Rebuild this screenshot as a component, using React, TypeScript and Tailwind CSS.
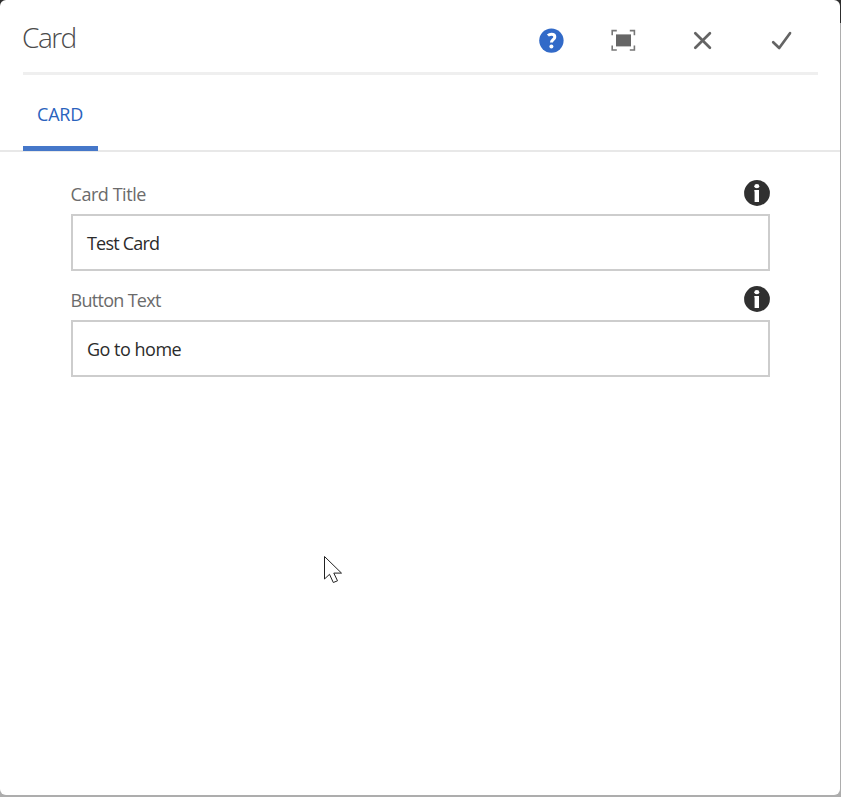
import React from "react";

function HelpIcon() {
  return (
    <svg width="26" height="26" viewBox="0 0 26 26">
      <circle cx="13.4" cy="12.6" r="12.2" fill="#326ac8" />
      <path d="M9.9 7.5C10.9 6.6 12.1 6.2 13.5 6.2c2 0 3.3 1.1 3.3 2.7 0 2.7-3.4 2.9-3.4 5.7" fill="none" stroke="#fff" strokeWidth="3" />
      <circle cx="13.4" cy="18.4" r="2" fill="#fff" />
    </svg>
  );
}

function FullscreenIcon() {
  return (
    <svg width="26" height="24" viewBox="0 0 26 24" fill="none" stroke="#777" strokeWidth="1.6">
      <path d="M2.2 6.2V1.6h4.6M19.8 1.6h4.6v4.6M24.4 16.4V21h-4.6M6.8 21H2.2v-4.6" />
      <rect x="6" y="5.4" width="15" height="12" fill="#666" stroke="none" />
    </svg>
  );
}

function CloseIcon() {
  return (
    <svg width="20" height="20" viewBox="0 0 20 20" stroke="#646464" strokeWidth="2.7" strokeLinecap="round">
      <path d="M2.3 2.2l14.6 14.6M16.9 2.2L2.3 16.8" />
    </svg>
  );
}

function CheckIcon() {
  return (
    <svg width="22" height="20" viewBox="0 0 22 20" fill="none" stroke="#646464" strokeWidth="2.7" strokeLinecap="round" strokeLinejoin="round">
      <path d="M2.2 11.2l6 5.8L19 2.2" />
    </svg>
  );
}

function InfoIcon() {
  return (
    <svg width="26" height="26" viewBox="0 0 26 26">
      <circle cx="13" cy="13" r="12.9" fill="#303030" />
      <ellipse cx="12.8" cy="6.2" rx="2.5" ry="2.1" fill="#fff" />
      <path d="M10.3 10H15v12h-4.4V11.4h-.3z" fill="#fff" />
    </svg>
  );
}

function Field({ label, value, labelClass, valueClass }: { label: string; value: string; labelClass: string; valueClass: string }) {
  return (
    <div className="h-[106px]">
      <div className="flex h-[34px] items-start justify-between">
        <label className={`mt-[2px] text-[18px] leading-6 text-[#6b6b6b] ${labelClass}`}>{label}</label>
        <InfoIcon />
      </div>
      <div className="flex h-[57px] items-center border-2 border-[#cdcdcd] px-[14px] text-[18px] leading-6 text-[#2b2b2b]">
        <span className={valueClass}>{value}</span>
      </div>
    </div>
  );
}

export default function App() {
  return (
    <div className="relative h-[797px] w-[841px] overflow-hidden bg-[#adadad] font-['Open_Sans','Noto_Sans',sans-serif]">
      <div className="absolute left-0 top-0 h-[23px] w-full bg-[#2d2d2d]" />
      <div className="relative h-[795px] w-[840px] rounded-[6px] bg-white">
        <header className="mx-[23px] flex h-[75px] w-[795px] items-start border-b-[3px] border-[#efefef]">
          <h1 className="-ml-px mt-[17px] flex-1 text-[28px] font-light leading-10 tracking-[-1.5px] text-[#4b4b4b]">Card</h1>
          <div className="flex h-[81px] items-center pr-[25px]">
            <HelpIcon />
            <div className="ml-[46px] flex"><FullscreenIcon /></div>
            <div className="ml-[57px] flex"><CloseIcon /></div>
            <div className="ml-[58px] flex"><CheckIcon /></div>
          </div>
        </header>
        <nav className="flex h-[77px] border-b-2 border-[#e8e8e8] pl-[23px]">
          <div className="h-[76px] w-[75px] border-b-[5px] border-[#4577c9] pl-[14px] pt-[27px] text-[18px] leading-6 tracking-[-0.2px] text-[#2a62bd]">
            CARD
          </div>
        </nav>
        <main className="ml-[71px] w-[699px] pt-[28px]">
          <Field label="Card Title" value="Test Card" labelClass="-ml-[0.5px] tracking-[-0.45px]" valueClass="tracking-[-0.8px]" />
          <Field label="Button Text" value="Go to home" labelClass="-ml-[0.5px] tracking-[-0.7px]" valueClass="tracking-[-0.5px]" />
        </main>
        <svg className="absolute left-[323px] top-[555px]" width="20" height="30" viewBox="0 0 20 30">
          <path d="M1.5 1.5V24l5-4.7 3.8 8.2 4.2-1.7-3.7-7.7h7.7z" fill="#fff" stroke="#222" strokeWidth="1" />
        </svg>
      </div>
    </div>
  );
}
